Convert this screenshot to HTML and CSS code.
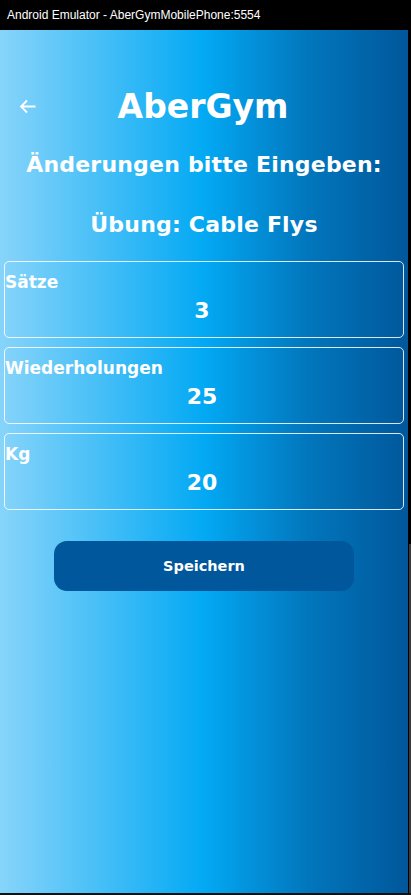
FILE: index.html
```html
<!DOCTYPE html>
<html lang="de">
<head>
<meta charset="utf-8">
<title>AberGym</title>
<link rel="stylesheet" href="styles.css">
</head>
<body>
<div class="titlebar">Android Emulator - AberGymMobilePhone:5554</div>
<div class="frame">
  <main class="screen">
    <header class="header">
      <svg class="back" width="17" height="15" viewBox="0 0 17 15" aria-hidden="true">
        <path d="M16.5 7.5H2M8 1.5L2 7.5l6 6" fill="none" stroke="#fff" stroke-width="1.8"/>
      </svg>
      <h1 class="brand">AberGym</h1>
    </header>
    <h2 class="heading">Änderungen bitte Eingeben:</h2>
    <h2 class="heading exercise">Übung: Cable Flys</h2>
    <section class="fields">
      <div class="field">
        <div class="field-label">Sätze</div>
        <div class="field-value">3</div>
      </div>
      <div class="field">
        <div class="field-label">Wiederholungen</div>
        <div class="field-value">25</div>
      </div>
      <div class="field">
        <div class="field-label">Kg</div>
        <div class="field-value">20</div>
      </div>
    </section>
    <button class="save">Speichern</button>
  </main>
  <div class="side"><div class="side-top"></div><div class="side-bottom"></div></div>
</div>
<div class="bottombar"></div>
</body>
</html>
```
FILE: styles.css
```css
html, body {
  margin: 0;
  padding: 0;
  background: #1a1a1a;
  overflow: hidden;
}
.titlebar {
  height: 30px;
  background: #000;
  color: #fff;
  font-family: "Liberation Sans", Arial, sans-serif;
  font-size: 12px;
  line-height: 30px;
  padding-left: 7px;
  box-sizing: border-box;
}
.frame {
  display: flex;
  height: 863px;
}
.screen {
  width: 408px;
  height: 863px;
  flex: none;
  background: linear-gradient(to right, #87d4fa 0%, #03a9f4 50%, #0277bd 75%, #01579b 100%);
  font-family: "DejaVu Sans", sans-serif;
  font-weight: bold;
  color: #fff;
  display: flex;
  flex-direction: column;
  align-items: center;
}
.side {
  flex: 1;
  display: flex;
  flex-direction: column;
}
.side-top {
  height: 514px;
  background: #000;
}
.side-bottom {
  flex: 1;
  background: #3a3a3a;
  border-left: 1px solid #000;
}
.bottombar {
  height: 2px;
  background: #111;
}
.header {
  position: relative;
  width: 100%;
  margin-top: 57px;
  display: flex;
  justify-content: center;
}
.back {
  position: absolute;
  left: 19px;
  top: 12px;
}
.brand {
  margin: 0 2px 0 0;
  font-size: 33px;
  line-height: 40px;
  font-weight: bold;
}
.heading {
  margin: 25px 0 0 0;
  font-size: 22px;
  line-height: 26px;
  font-weight: bold;
  letter-spacing: 0.2px;
}
.heading.exercise {
  margin-top: 34px;
}
.fields {
  margin-top: 23px;
  width: 400px;
  display: flex;
  flex-direction: column;
  gap: 9px;
}
.field {
  height: 77px;
  box-sizing: border-box;
  border: 1px solid rgba(255, 255, 255, 0.85);
  border-radius: 5px;
  padding-top: 10px;
}
.field-label {
  font-size: 17px;
  line-height: 21px;
}
.field-value {
  margin-top: 5px;
  padding-right: 4px;
  font-size: 22px;
  line-height: 26px;
  text-align: center;
}
.save {
  margin-top: 31px;
  width: 300px;
  height: 50px;
  border: none;
  border-radius: 13px;
  background: #01579b;
  color: #fff;
  font-family: "DejaVu Sans", sans-serif;
  font-weight: bold;
  font-size: 14.5px;
}
```
